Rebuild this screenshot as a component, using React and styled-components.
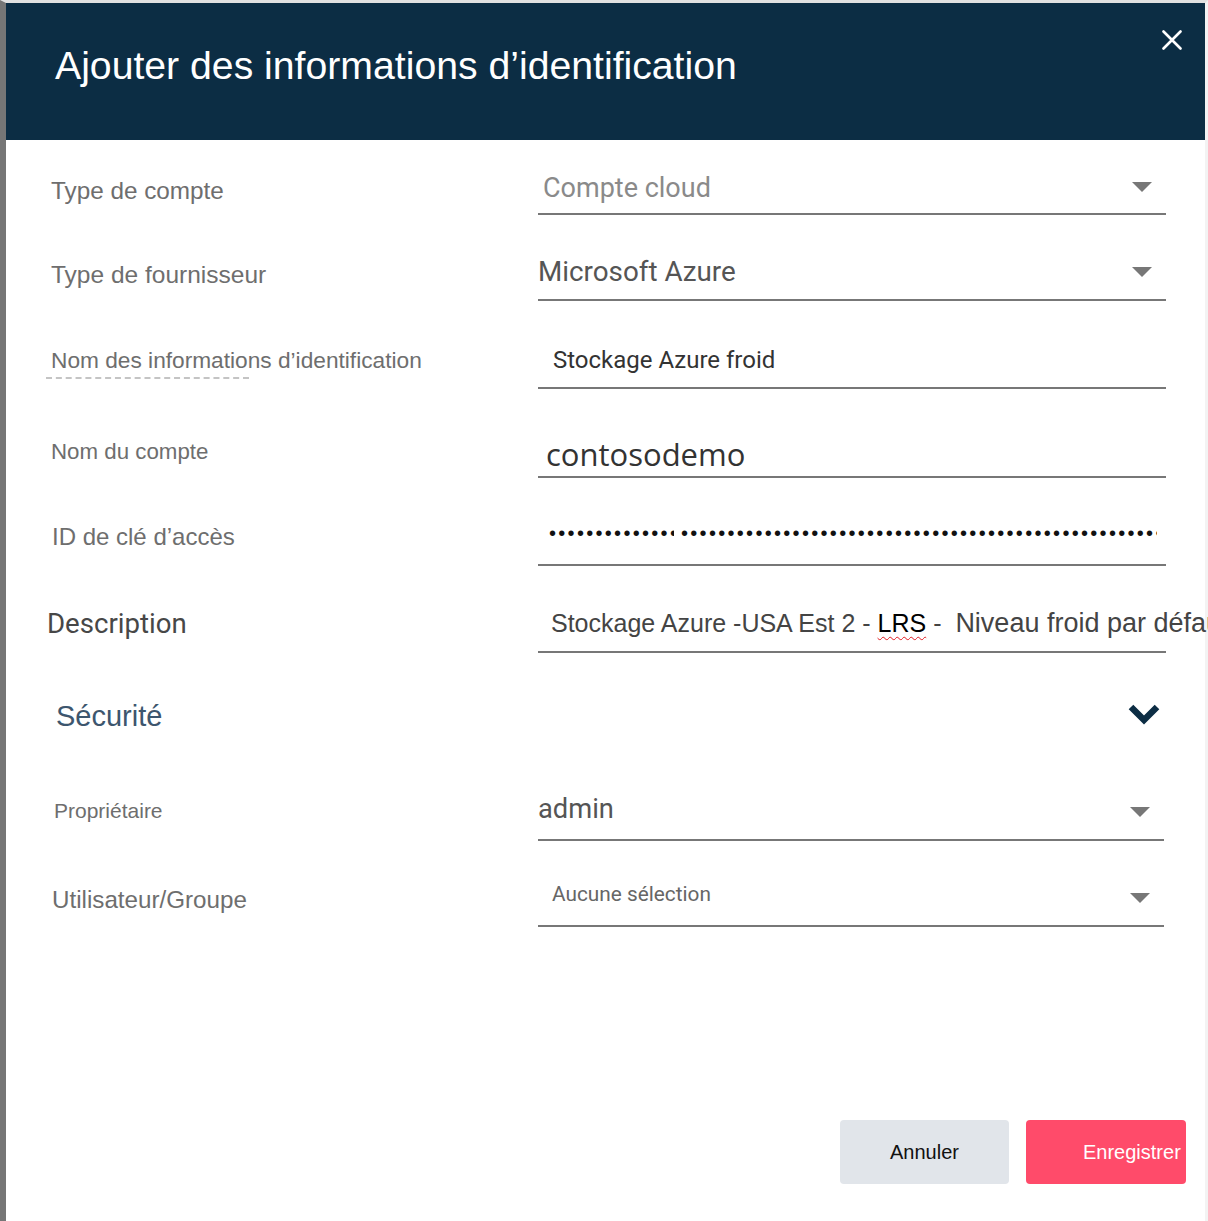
import React from "react";
import styled, { createGlobalStyle } from "styled-components";

const GlobalStyle = createGlobalStyle`
  html, body {
    margin: 0;
    padding: 0;
    overflow: hidden;
    background: #ffffff;
  }
  * { box-sizing: border-box; }
`;

const Dialog = styled.div`
  display: flex;
  flex-direction: column;
  height: 1221px;
  background: #ffffff;
  border-left: 6px solid #767676;
  border-top: 3px solid #e1e1e1;
  border-right: 3px solid #f3f3f3;
`;

const Header = styled.header`
  position: relative;
  height: 137px;
  flex: none;
  background: #0c2d44;
  padding: 43px 0 0 49px;
`;

const Title = styled.h1`
  margin: 0;
  font-family: "Liberation Sans", Arial, sans-serif;
  font-weight: 400;
  font-size: 39.2px;
  line-height: 1;
  color: #ffffff;
  white-space: nowrap;
`;

const CloseButton = styled.button`
  position: absolute;
  top: 27px;
  right: 23px;
  width: 20px;
  height: 20px;
  padding: 0;
  border: 0;
  background: transparent;
  display: flex;
  cursor: pointer;
`;

const Form = styled.div`
  display: flex;
  flex-direction: column;
`;

const Row = styled.div`
  display: grid;
  grid-template-columns: 487px ${(p) => p.$fw || 628}px;
  padding-left: 45px;
  height: ${(p) => p.$h}px;
`;

const Label = styled.div`
  display: flex;
  flex-direction: column;
  justify-content: flex-end;
  align-items: flex-start;
  padding-bottom: ${(p) => p.$pb}px;
  margin-left: ${(p) => p.$indent || 0}px;
  font-family: ${(p) =>
    p.$roboto ? "Roboto, 'Liberation Sans', sans-serif" : "'Liberation Sans', Arial, sans-serif"};
  font-size: ${(p) => p.$size}px;
  line-height: 1;
  color: ${(p) => p.$color || "#6e6e6e"};
  white-space: nowrap;
`;

const Dashed = styled.span`
  display: block;
  width: 203px;
  margin: 5.5px 0 0 -5px;
  border-bottom: 2px dashed #c4c4c4;
`;

const Field = styled.div`
  display: flex;
  align-items: flex-end;
  justify-content: space-between;
  min-width: 0;
  padding-bottom: ${(p) => p.$pb}px;
  padding-left: ${(p) => p.$indent || 0}px;
  border-bottom: ${(p) => (p.$plain ? "none" : "2px solid #777777")};
`;

const Value = styled.span`
  display: block;
  font-family: ${(p) => p.$font || "Roboto, 'Liberation Sans', sans-serif"};
  font-size: ${(p) => p.$size}px;
  line-height: 1;
  color: ${(p) => p.$color || "#555555"};
  white-space: nowrap;
`;

const Larger = styled.span`
  font-size: 27px;
`;

const Squiggle = styled.span`
  color: #000000;
  text-decoration: underline wavy #e0191f;
  text-decoration-thickness: 1px;
  text-underline-offset: 4px;
`;

const DotsLine = styled.div`
  display: flex;
  gap: 7px;
`;

const Dots = styled.span`
  display: block;
  width: ${(p) => p.$w}px;
  overflow: hidden;
  white-space: nowrap;
  font-family: "Liberation Sans", Arial, sans-serif;
  font-size: 20px;
  line-height: 1;
  letter-spacing: 2.3px;
  color: #111111;
`;

const Caret = styled.span`
  flex: none;
  width: 0;
  height: 0;
  margin: 0 14px ${(p) => p.$mb}px 0;
  border-left: 10px solid transparent;
  border-right: 10px solid transparent;
  border-top: 10px solid #777777;
`;

const Chevron = styled.svg`
  flex: none;
  margin-right: 6px;
`;

const Footer = styled.div`
  margin-top: auto;
  display: flex;
  justify-content: flex-end;
  gap: 17px;
  padding: 0 19px 37px 0;
`;

const Button = styled.button`
  height: 64px;
  width: ${(p) => p.$w}px;
  border: 0;
  border-radius: 4px;
  font-family: "Liberation Sans", Arial, sans-serif;
  font-size: 20px;
  cursor: pointer;
  white-space: nowrap;
  overflow: hidden;
  background: ${(p) => (p.$primary ? "#ff4b6a" : "#e1e5ea")};
  color: ${(p) => (p.$primary ? "#ffffff" : "#111111")};
  text-align: ${(p) => (p.$primary ? "left" : "center")};
  padding: ${(p) => (p.$primary ? "0 0 0 57px" : "0")};
`;

const bullets = (n) => "•".repeat(n);

export default function App() {
  return (
    <>
      <GlobalStyle />
      <Dialog>
        <Header>
          <Title>Ajouter des informations d’identification</Title>
          <CloseButton aria-label="Fermer">
            <svg width="20" height="20" viewBox="0 0 20 20">
              <path d="M1.5 1.5 L18.5 18.5 M18.5 1.5 L1.5 18.5" stroke="#ffffff" strokeWidth="2.6" strokeLinecap="round" />
            </svg>
          </CloseButton>
        </Header>

        <Form>
          <Row $h={75}>
            <Label $size={24.3} $pb={12}>Type de compte</Label>
            <Field $pb={11} $indent={5}>
              <Value $size={27} $color="#8a8a8a">Compte cloud</Value>
              <Caret $mb={10} />
            </Field>
          </Row>

          <Row $h={86}>
            <Label $size={24.5} $pb={14}>Type de fournisseur</Label>
            <Field $pb={13}>
              <Value $size={27.8} $color="#555555">Microsoft Azure</Value>
              <Caret $mb={9} />
            </Field>
          </Row>

          <Row $h={88}>
            <Label $size={22.7} $pb={10}>
              <span>Nom des informations d’identification</span>
              <Dashed />
            </Label>
            <Field $pb={15} $indent={15}>
              <Value $size={24} $color="#333333">Stockage Azure froid</Value>
            </Field>
          </Row>

          <Row $h={89}>
            <Label $size={22.3} $pb={14.5}>Nom du compte</Label>
            <Field $pb={6} $indent={8}>
              <Value $size={31} $font="'Open Sans', 'DejaVu Sans', sans-serif" $color="#333333">
                contosodemo
              </Value>
            </Field>
          </Row>

          <Row $h={88}>
            <Label $size={24} $pb={17.5} $indent={1}>ID de clé d’accès</Label>
            <Field $pb={21} $indent={11}>
              <DotsLine>
                <Dots $w={125}>{bullets(14)}</Dots>
                <Dots $w={476}>{bullets(52)}</Dots>
              </DotsLine>
            </Field>
          </Row>

          <Row $h={87}>
            <Label $roboto $size={27.6} $pb={15.5} $indent={-4} $color="#474747">Description</Label>
            <Field $pb={14.5} $indent={13}>
              <Value $size={25} $font="'Liberation Sans', Arial, sans-serif" $color="#444444">
                Stockage Azure -USA Est 2 - <Squiggle>LRS</Squiggle> -{"\u00a0 "}
                <Larger>Niveau froid par défaut</Larger>
              </Value>
            </Field>
          </Row>

          <Row $h={100}>
            <Label $size={29} $pb={22} $indent={5} $color="#3d566e">Sécurité</Label>
            <Field $plain $pb={28}>
              <span />
              <Chevron width="32" height="21" viewBox="0 0 32 21">
                <path d="M3 3 L16 16 L29 3" fill="none" stroke="#0c2d44" strokeWidth="6.5" strokeLinejoin="miter" />
              </Chevron>
            </Field>
          </Row>

          <Row $h={88} $fw={626}>
            <Label $size={21} $pb={20} $indent={3}>Propriétaire</Label>
            <Field $pb={16}>
              <Value $size={27.3} $color="#555555">admin</Value>
              <Caret $mb={6} />
            </Field>
          </Row>

          <Row $h={86} $fw={626}>
            <Label $size={24.2} $pb={15} $indent={1}>Utilisateur/Groupe</Label>
            <Field $pb={20} $indent={14}>
              <Value $size={20.8} $color="#666666">Aucune sélection</Value>
              <Caret $mb={2} />
            </Field>
          </Row>
        </Form>

        <Footer>
          <Button $w={169}>Annuler</Button>
          <Button $w={160} $primary>Enregistrer</Button>
        </Footer>
      </Dialog>
    </>
  );
}
